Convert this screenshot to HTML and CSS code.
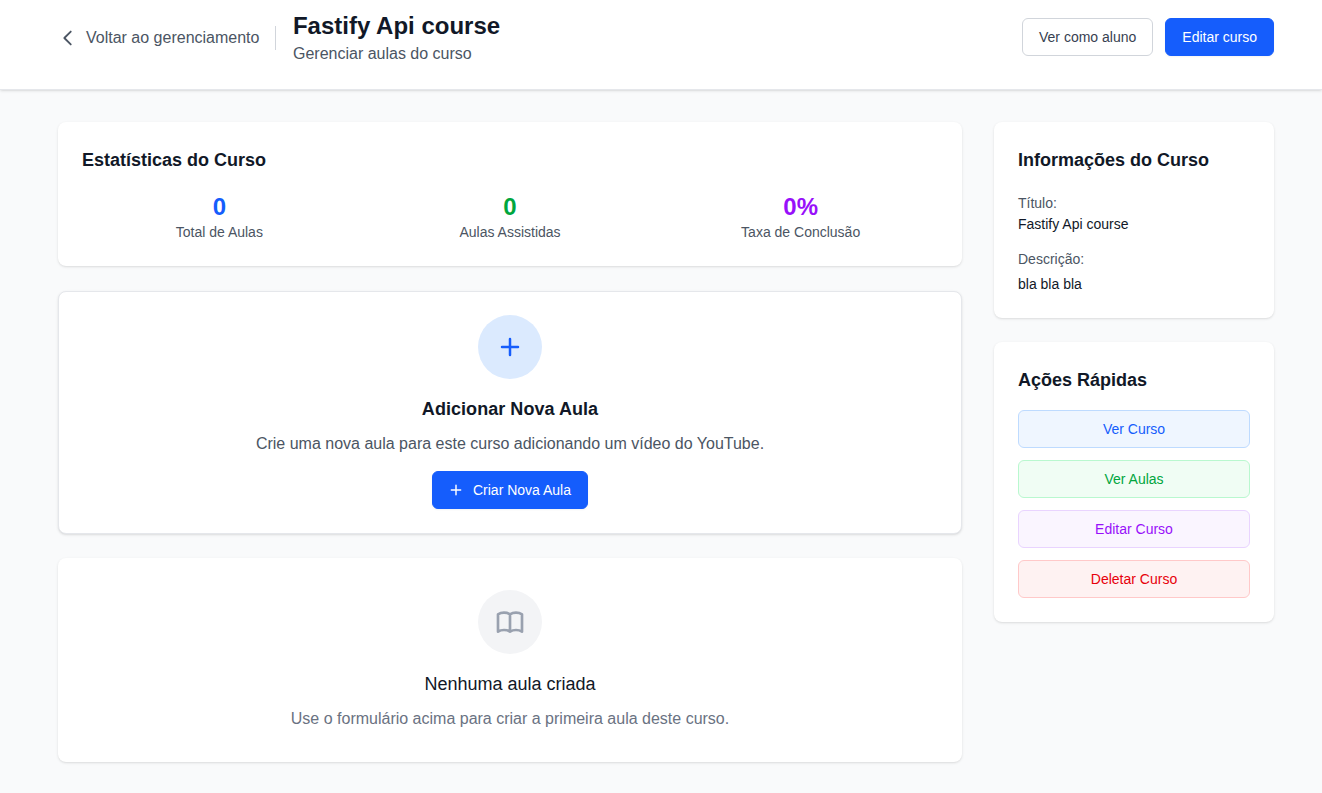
FILE: index.html
```html
<!DOCTYPE html>
<html lang="pt-BR">
<head>
<meta charset="utf-8">
<title>Fastify Api course</title>
<link rel="stylesheet" href="styles.css">
</head>
<body>
<header class="topbar">
  <div class="topbar-left">
    <a class="back" href="#">
      <svg class="back-icon" viewBox="0 0 24 24" fill="none" stroke="currentColor" stroke-width="2" stroke-linecap="round" stroke-linejoin="round"><path d="M15 19l-7-7 7-7"/></svg>
      <span>Voltar ao gerenciamento</span>
    </a>
    <div class="divider"></div>
    <div class="heading">
      <h1>Fastify Api course</h1>
      <p>Gerenciar aulas do curso</p>
    </div>
  </div>
  <div class="topbar-actions">
    <a class="btn btn-outline" href="#">Ver como aluno</a>
    <a class="btn btn-primary" href="#">Editar curso</a>
  </div>
</header>
<div class="layout">
  <main class="main-col">
    <section class="card stats-card">
      <h2>Estatísticas do Curso</h2>
      <div class="stats">
        <div class="stat"><div class="stat-value blue">0</div><div class="stat-label">Total de Aulas</div></div>
        <div class="stat"><div class="stat-value green">0</div><div class="stat-label">Aulas Assistidas</div></div>
        <div class="stat"><div class="stat-value purple">0%</div><div class="stat-label">Taxa de Conclusão</div></div>
      </div>
    </section>
    <section class="card add-card">
      <div class="circle circle-blue">
        <svg class="plus-large" viewBox="0 0 24 24" fill="none" stroke="currentColor" stroke-width="2.5" stroke-linecap="round" stroke-linejoin="round"><path d="M12 4v16m8-8H4"/></svg>
      </div>
      <h3>Adicionar Nova Aula</h3>
      <p class="add-text">Crie uma nova aula para este curso adicionando um vídeo do YouTube.</p>
      <a class="btn btn-primary btn-create" href="#">
        <svg class="plus-small" viewBox="0 0 24 24" fill="none" stroke="currentColor" stroke-width="2.5" stroke-linecap="round" stroke-linejoin="round"><path d="M12 4v16m8-8H4"/></svg>
        <span>Criar Nova Aula</span>
      </a>
    </section>
    <section class="card empty-card">
      <div class="circle circle-gray">
        <svg class="book" viewBox="0 0 24 24" fill="none" stroke="currentColor" stroke-width="2" stroke-linecap="round" stroke-linejoin="round"><path d="M12 6.253v13m0-13C10.832 5.477 9.246 5 7.5 5S4.168 5.477 3 6.253v13C4.168 18.477 5.754 18 7.5 18s3.332.477 4.5 1.253m0-13C13.168 5.477 14.754 5 16.5 5c1.747 0 3.332.477 4.5 1.253v13C19.832 18.477 18.247 18 16.5 18c-1.746 0-3.332.477-4.5 1.253"/></svg>
      </div>
      <h3 class="empty-title">Nenhuma aula criada</h3>
      <p class="empty-text">Use o formulário acima para criar a primeira aula deste curso.</p>
    </section>
  </main>
  <aside class="side-col">
    <section class="card info-card">
      <h2>Informações do Curso</h2>
      <div class="info-label">Título:</div>
      <div class="info-value">Fastify Api course</div>
      <div class="info-label info-gap">Descrição:</div>
      <div class="info-value info-desc">bla bla bla</div>
    </section>
    <section class="card actions-card">
      <h2>Ações Rápidas</h2>
      <div class="actions">
        <a class="action action-blue" href="#">Ver Curso</a>
        <a class="action action-green" href="#">Ver Aulas</a>
        <a class="action action-purple" href="#">Editar Curso</a>
        <a class="action action-red" href="#">Deletar Curso</a>
      </div>
    </section>
  </aside>
</div>
</body>
</html>
```
FILE: styles.css
```css
* { box-sizing: border-box; }
html, body { margin: 0; padding: 0; }
body {
  background: #f9fafb;
  font-family: "Liberation Sans", Arial, sans-serif;
  color: #111827;
  min-height: 793px;
}
a { text-decoration: none; }
h1, h2, h3, p { margin: 0; }

.topbar {
  height: 90px;
  background: #fff;
  border-bottom: 1px solid #e5e7eb;
  box-shadow: 0 1px 3px rgba(0,0,0,.1), 0 1px 2px -1px rgba(0,0,0,.1);
  padding: 0 48px 15px 58px;
  display: flex;
  align-items: center;
  justify-content: space-between;
}
.topbar-left { display: flex; align-items: center; }
.back { display: flex; align-items: center; gap: 7px; color: #4b5563; font-size: 16px; padding-top: 1px; }
.back-icon { width: 22px; height: 22px; margin-left: -1px; }
.divider { width: 1px; height: 24px; background: #d1d5db; margin: 1px 16.5px 0 16px; }
.heading { padding-top: 2px; }
.heading h1 { font-size: 24px; line-height: 32px; font-weight: 700; color: #111827; }
.heading p { font-size: 16px; line-height: 24px; color: #4b5563; }
.topbar-actions { display: flex; gap: 12px; }

.btn {
  display: flex;
  align-items: center;
  justify-content: center;
  height: 38px;
  border-radius: 6px;
  font-size: 14px;
  padding: 0 16px;
}
.btn-outline { background: #fff; border: 1px solid #d1d5db; color: #374151; }
.btn-primary { background: #155dfc; color: #fff; border: 1px solid #155dfc; box-shadow: 0 1px 2px rgba(0,0,0,.05); }

.layout {
  display: grid;
  grid-template-columns: 904px 280px;
  gap: 32px;
  padding: 32px 48px 31px 58px;
}
.main-col { display: flex; flex-direction: column; gap: 24px; }
.side-col { display: flex; flex-direction: column; gap: 24px; align-items: stretch; align-self: start; }
.card {
  background: #fff;
  border-radius: 8px;
  box-shadow: 0 1px 3px rgba(0,0,0,.1), 0 1px 2px -1px rgba(0,0,0,.1);
  padding: 24px;
}
.card h2 { font-size: 18px; line-height: 28px; font-weight: 700; color: #111827; }

.stats-card { height: 144px; }
.stats { display: grid; grid-template-columns: repeat(3, 1fr); gap: 16px; margin-top: 17px; }
.stat { text-align: center; }
.stat-value { font-size: 24px; line-height: 32px; font-weight: 700; }
.stat-label { font-size: 14px; line-height: 20px; color: #4b5563; margin-top: -1px; }
.blue { color: #155dfc; }
.green { color: #00a63e; }
.purple { color: #9810fa; }

.add-card {
  height: 243px;
  margin-top: 1px;
  border: 1px solid #e5e7eb;
  padding: 23px;
  display: flex;
  flex-direction: column;
  align-items: center;
}
.circle { width: 64px; height: 64px; border-radius: 50%; display: flex; align-items: center; justify-content: center; flex: none; }
.circle-blue { background: #dbeafe; color: #155dfc; }
.circle-gray { background: #f3f4f6; color: #99a1af; }
.plus-large { width: 24px; height: 24px; }
.plus-small { width: 14px; height: 14px; flex: none; }
.book { width: 32px; height: 32px; }
.add-card h3 { font-size: 18px; line-height: 28px; font-weight: 700; margin-top: 16px; letter-spacing: .05px; }
.add-text { font-size: 16px; line-height: 24px; color: #4b5563; margin-top: 9px; }
.btn-create { gap: 10px; margin-top: 15px; height: 38px; width: 156px; padding: 0; }

.empty-card {
  height: 204px;
  padding-top: 32px;
  display: flex;
  flex-direction: column;
  align-items: center;
}
.empty-title { font-size: 18px; line-height: 28px; font-weight: 400; color: #111827; margin-top: 16px; }
.empty-text { font-size: 16px; line-height: 24px; color: #6a7282; margin-top: 9px; }

.info-card { height: 196px; }
.info-label { font-size: 14px; line-height: 20px; color: #4b5563; margin-top: 19px; }
.info-value { font-size: 14px; line-height: 20px; color: #111827; margin-top: 1px; }
.info-gap { margin-top: 15px; }
.info-desc { margin-top: 5px; }

.actions-card { height: 280px; }
.actions { display: flex; flex-direction: column; gap: 12px; margin-top: 16px; }
.action {
  height: 38px;
  border-radius: 6px;
  border: 1px solid;
  font-size: 14px;
  display: flex;
  align-items: center;
  justify-content: center;
}
.action-blue { background: #eff6ff; border-color: #bedbff; color: #155dfc; }
.action-green { background: #f0fdf4; border-color: #b9f8cf; color: #00a63e; }
.action-purple { background: #faf5ff; border-color: #e9d4ff; color: #9810fa; }
.action-red { background: #fef2f2; border-color: #ffc9c9; color: #e7000b; }
```
